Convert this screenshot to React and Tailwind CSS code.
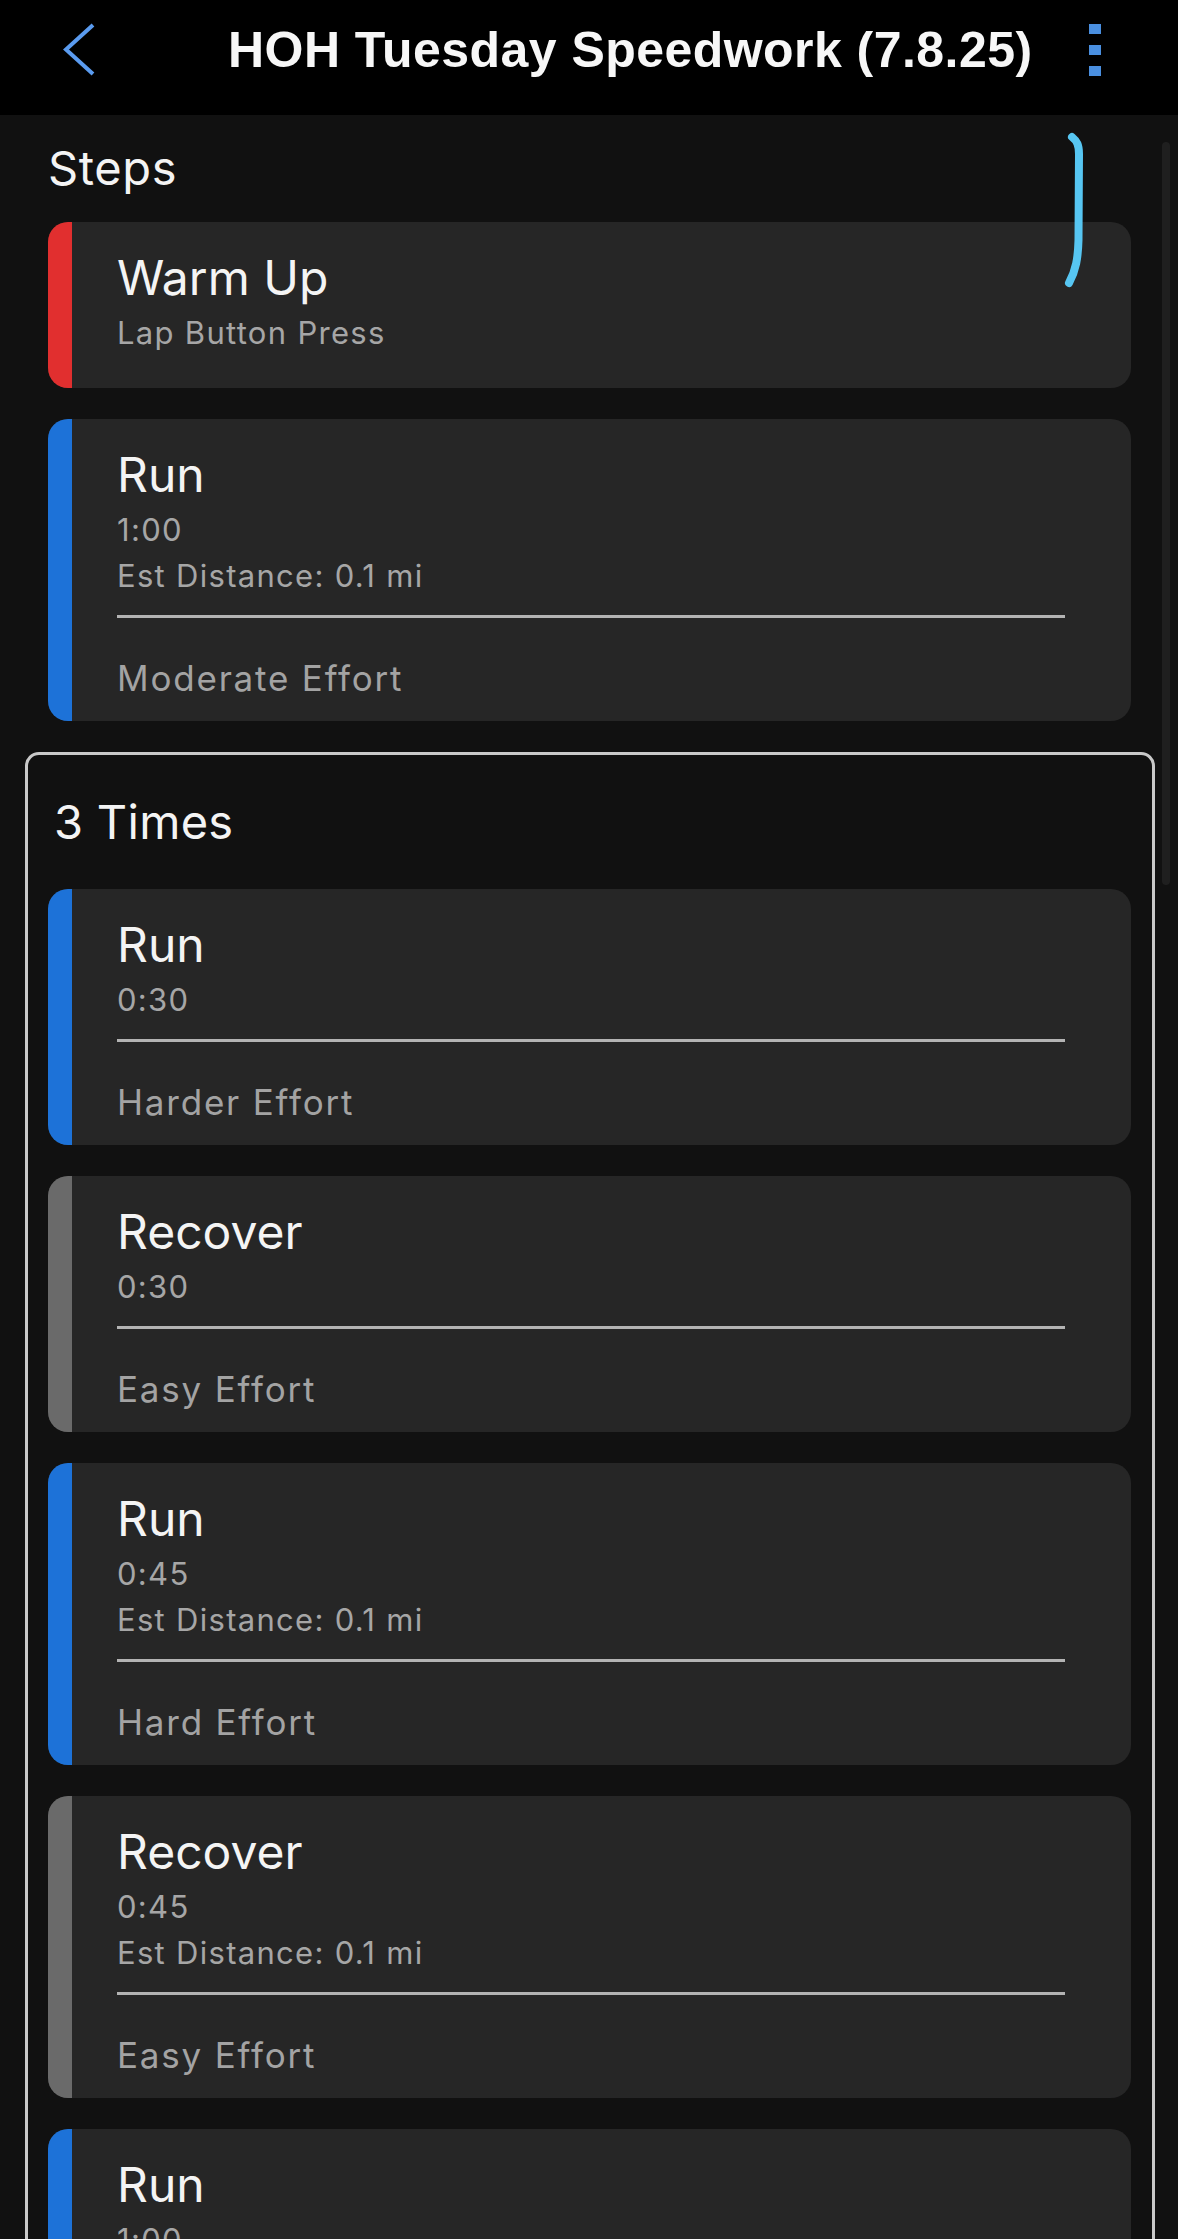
import React from 'react';

const stripes = {
  red: 'bg-[#e12f2f]',
  blue: 'bg-[#1d72d8]',
  gray: 'bg-[#6a6a6a]',
};

const topSteps = [
  { title: 'Warm Up', lines: ['Lap Button Press'], color: 'red' },
  { title: 'Run', lines: ['1:00', 'Est Distance: 0.1 mi'], effort: 'Moderate Effort', color: 'blue' },
];

const repeatSteps = [
  { title: 'Run', lines: ['0:30'], effort: 'Harder Effort', color: 'blue' },
  { title: 'Recover', lines: ['0:30'], effort: 'Easy Effort', color: 'gray' },
  { title: 'Run', lines: ['0:45', 'Est Distance: 0.1 mi'], effort: 'Hard Effort', color: 'blue' },
  { title: 'Recover', lines: ['0:45', 'Est Distance: 0.1 mi'], effort: 'Easy Effort', color: 'gray' },
  { title: 'Run', lines: ['1:00', 'Est Distance: 0.1 mi'], effort: 'Harder Effort', color: 'blue' },
];

function StepCard({ step }) {
  return (
    <div className="flex rounded-[20px] overflow-hidden bg-[#262626]">
      <div className={`w-[24px] shrink-0 ${stripes[step.color]}`}></div>
      <div className={`flex-1 pl-[45px] pr-[66px] pt-[28px] ${step.effort ? 'pb-[21px]' : 'pb-[32px]'}`}>
        <div className="text-[48px] leading-[56px] text-[#f4f4f4]">{step.title}</div>
        <div className="mt-[4px]">
          {step.lines.map((line) => (
            <div key={line} className="text-[31px] leading-[46px] tracking-[1.3px] text-[#a6a6a6]">{line}</div>
          ))}
        </div>
        {step.effort && (
          <>
            <div className="mt-[16px] h-[3px] bg-[#b3b3b3]"></div>
            <div className="mt-[38px] text-[35px] leading-[44px] tracking-[1.8px] text-[#a3a3a3]">{step.effort}</div>
          </>
        )}
      </div>
    </div>
  );
}

export default function App() {
  return (
    <div className="relative h-[2239px] overflow-hidden bg-[#111111] font-['Inter',sans-serif]">
      {/* top bar */}
      <header className="h-[115px] bg-black">
        <div className="flex items-center h-[100px]">
          <div className="w-[228px] shrink-0 pl-[63px]">
            <svg width="32" height="54" viewBox="0 0 32 54" fill="none">
              <polyline points="30,2 3,26.5 30,51" stroke="#5a9bef" strokeWidth="4" />
            </svg>
          </div>
          <h1 className="font-['Liberation_Sans',Arial,sans-serif] font-bold text-[50px] leading-[50px] tracking-[0.45px] text-[#f7f7f7] whitespace-nowrap">
            HOH Tuesday Speedwork (7.8.25)
          </h1>
          <div className="ml-auto mr-[77px] flex flex-col gap-[11px]">
            <div className="w-[12px] h-[10px] bg-[#4a8fe0]"></div>
            <div className="w-[12px] h-[10px] bg-[#4a8fe0]"></div>
            <div className="w-[12px] h-[10px] bg-[#4a8fe0]"></div>
          </div>
        </div>
      </header>

      <main className="pl-[48px] pr-[47px]">
        <h2 className="mt-[25px] text-[47px] leading-[56px] tracking-[0.6px] text-[#f4f4f4]">Steps</h2>

        <div className="mt-[26px] flex flex-col gap-[31px]">
          {topSteps.map((s, i) => (
            <StepCard key={i} step={s} />
          ))}
        </div>

        <section className="mt-[31px] -ml-[23px] -mr-[24px] border-[3px] border-[#c9c9c9] rounded-[14px] pl-[20px] pr-[21px] pt-[39px]">
          <h3 className="ml-[6px] text-[47px] leading-[56px] tracking-[0.3px] text-[#f4f4f4]">3 Times</h3>
          <div className="mt-[39px] flex flex-col gap-[31px]">
            {repeatSteps.map((s, i) => (
              <StepCard key={i} step={s} />
            ))}
          </div>
        </section>
      </main>

      {/* scroll indicator */}
      <div className="absolute left-[1162px] top-[142px] w-[8px] h-[743px] rounded-full bg-[#1f1f1f]"></div>

      {/* hand-drawn mark */}
      <svg className="absolute left-[1060px] top-[130px]" width="30" height="160" viewBox="0 0 30 160" fill="none">
        <path d="M12 7 C17 11 19 15 19 24 L18.5 110 C18 128 16 140 9 153" stroke="#57c6f2" strokeWidth="8" strokeLinecap="round" />
      </svg>
    </div>
  );
}
